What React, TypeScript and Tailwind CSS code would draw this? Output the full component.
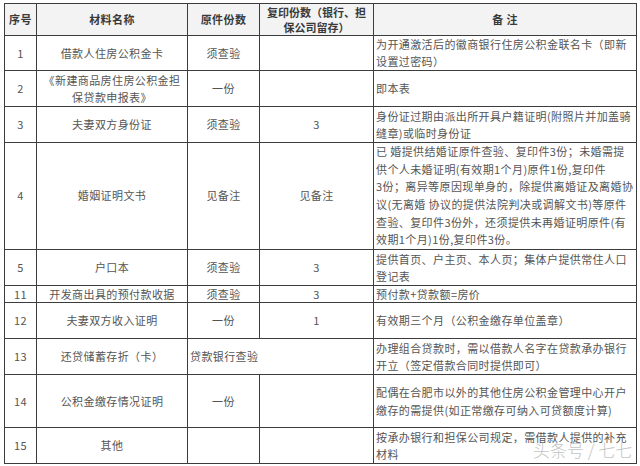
import React from "react";

type Row = {
  no: string;
  name: React.ReactNode;
  orig?: React.ReactNode;
  copy?: React.ReactNode;
  span?: React.ReactNode;
  note: string[];
  h: number;
  lh?: string;
};

const rows: Row[] = [
  { no: "1", name: "借款人住房公积金卡", orig: "须查验", copy: "", note: ["为开通激活后的徽商银行住房公积金联名卡（即新", "设置过密码）"], h: 35 },
  { no: "2", name: <>《新建商品房住房公积金担<br />保贷款申报表》</>, orig: "一份", copy: "", note: ["即本表"], h: 36 },
  { no: "3", name: "夫妻双方身份证", orig: "须查验", copy: "3", note: ["身份证过期由派出所开具户籍证明(附照片并加盖骑", "缝章)或临时身份证"], h: 36 },
  {
    no: "4",
    name: "婚姻证明文书",
    orig: "见备注",
    copy: "见备注",
    note: [
      "已 婚提供结婚证原件查验、复印件3份；未婚需提",
      "供个人未婚证明(有效期1个月)原件1份,复印件",
      "3份；离异等原因现单身的，除提供离婚证及离婚协",
      "议(无离婚 协议的提供法院判决或调解文书)等原件",
      "查验、复印件3份外，还须提供未再婚证明原件(有",
      "效期1个月)1份,复印件3份。",
    ],
    h: 107,
    lh: "leading-[17.6px]",
  },
  { no: "5", name: "户口本", orig: "须查验", copy: "3", note: ["提供首页、户主页、本人页；集体户提供常住人口", "登记表"], h: 36 },
  { no: "11", name: "开发商出具的预付款收据", orig: "须查验", copy: "3", note: ["预付款+贷款额=房价"], h: 17, lh: "leading-[15px]" },
  { no: "12", name: "夫妻双方收入证明", orig: "一份", copy: "1", note: ["有效期三个月（公积金缴存单位盖章）"], h: 36 },
  { no: "13", name: "还贷储蓄存折（卡）", span: "贷款银行查验", note: ["办理组合贷款时，需以借款人名字在贷款承办银行", "开立（签定借款合同时提供即可）"], h: 36 },
  { no: "14", name: "公积金缴存情况证明", orig: "一份", copy: "", note: ["配偶在合肥市以外的其他住房公积金管理中心开户", "缴存的需提供(如正常缴存可纳入可贷额度计算)"], h: 53, lh: "leading-[18px]" },
  { no: "15", name: "其他", orig: "", copy: "", note: ["按承办银行和担保公司规定，需借款人提供的补充", "材料"], h: 36 },
];

const cell = "border border-[#3c3c3c] px-[2px] py-0 align-middle";

export default function App() {
  return (
    <div
      className="relative w-[640px] h-[466px] bg-white overflow-hidden pt-[3px] pl-[4px]"
      style={{ fontFamily: '"Noto Sans CJK SC", "Noto Sans", sans-serif' }}
    >
      <table className="table-fixed border-collapse w-[632px] text-[11px] tracking-[0.4px] leading-[17px] text-[#555]">
        <colgroup>
          <col className="w-[32px]" />
          <col className="w-[151px]" />
          <col className="w-[72px]" />
          <col className="w-[114px]" />
          <col className="w-[263px]" />
        </colgroup>
        <thead>
          <tr className="h-[32px] bg-[#f3f3f3] text-[#3a3a3a] font-bold leading-[15px]">
            <th className={`${cell} text-center`}>序号</th>
            <th className={`${cell} text-center`}>材料名称</th>
            <th className={`${cell} text-center`}>原件份数</th>
            <th className={`${cell} text-center whitespace-nowrap tracking-[0px]`}>
              复印份数（银行、担<br />保公司留存）
            </th>
            <th className={`${cell} text-center`}>备 注</th>
          </tr>
        </thead>
        <tbody>
          {rows.map((r) => (
            <tr key={r.no} style={{ height: r.h }} className={r.lh ?? ""}>
              <td className={`${cell} text-center`}>{r.no}</td>
              <td className={`${cell} text-center whitespace-nowrap`}>{r.name}</td>
              {r.span !== undefined ? (
                <td colSpan={2} className={`${cell} text-left`}>{r.span}</td>
              ) : (
                <>
                  <td className={`${cell} text-center`}>{r.orig}</td>
                  <td className={`${cell} text-center`}>{r.copy}</td>
                </>
              )}
              <td className={`${cell} text-left whitespace-nowrap overflow-hidden`}>
                {r.note.map((l, i) => (
                  <div key={i}>{l}</div>
                ))}
              </td>
            </tr>
          ))}
        </tbody>
      </table>
      <div className="absolute left-[533px] top-[439px] text-[17px] leading-[22px] text-[#c4c4c4] font-light whitespace-nowrap">
        头条号 / 七七
      </div>
    </div>
  );
}
